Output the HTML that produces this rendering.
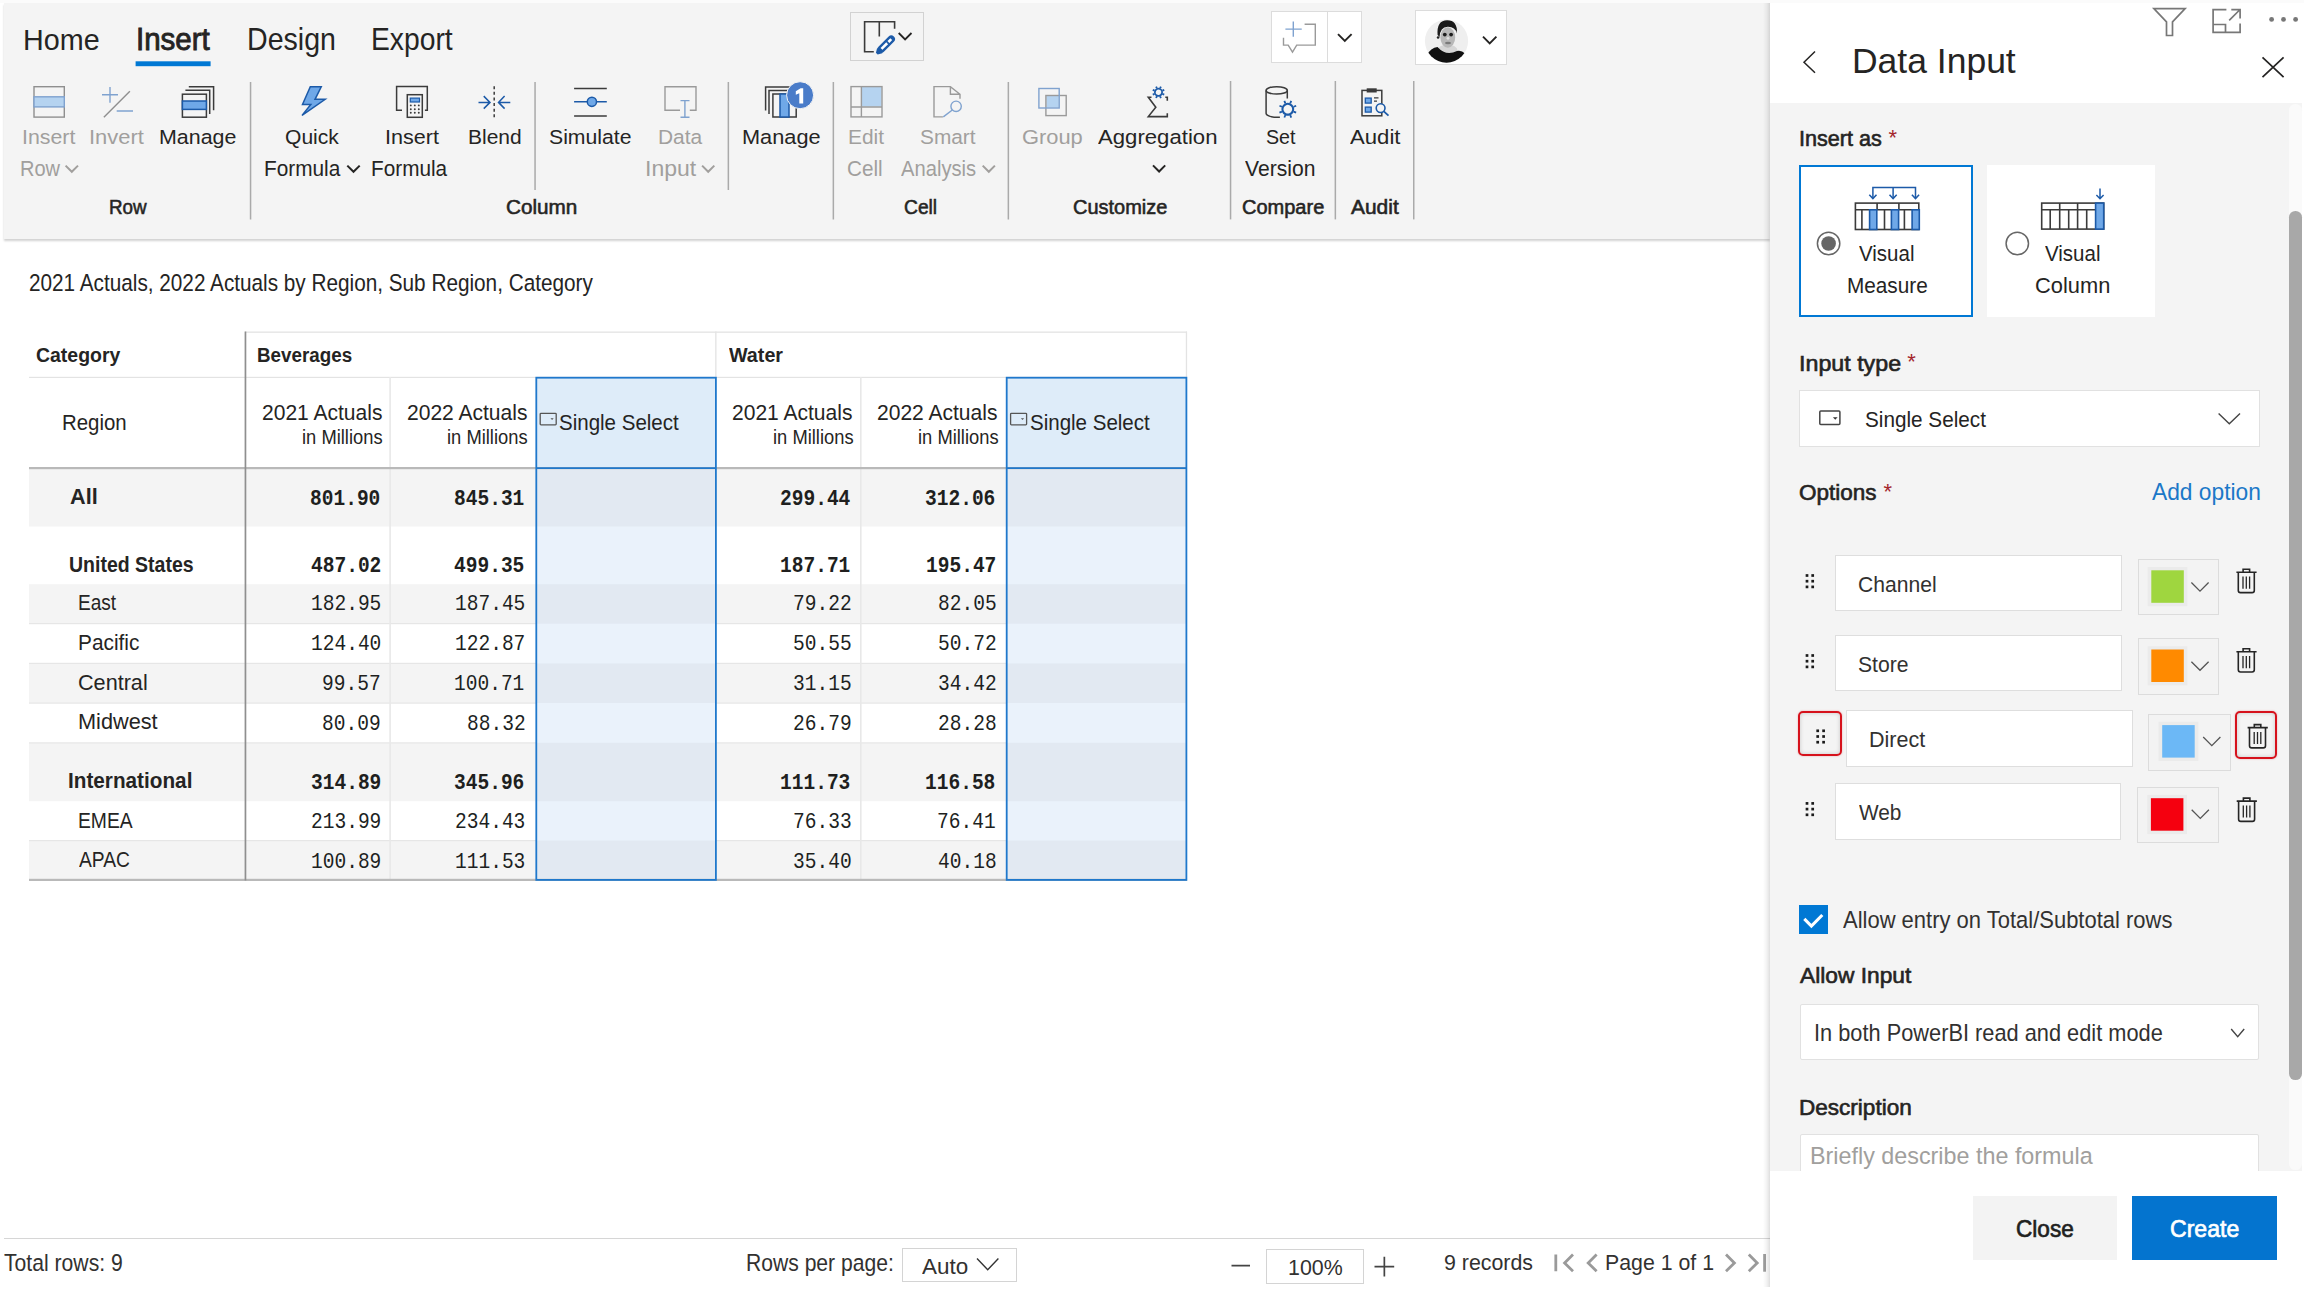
<!DOCTYPE html>
<html><head><meta charset="utf-8"><style>
html,body{margin:0;padding:0;}
body{width:2304px;height:1289px;overflow:hidden;position:relative;background:#fff;font-family:"Liberation Sans",sans-serif;}
.b{position:absolute;box-sizing:border-box;}
.t{position:absolute;white-space:pre;transform-origin:0 0;}
svg.ov{position:absolute;left:0;top:0;}
</style></head><body>
<!-- top strip -->
<div class="b" style="left:0;top:0;width:2304px;height:3px;background:#fbfbfb"></div>
<!-- ribbon -->
<div class="b" style="left:4px;top:2.5px;width:1766px;height:236.5px;background:#f4f4f4;box-shadow:0 1.5px 2px rgba(0,0,0,0.18)"></div>
<!-- status line -->
<div class="b" style="left:4px;top:1237.5px;width:1766px;height:1.5px;background:#d6d6d6"></div>
<div class="b" style="left:901.7px;top:1247.6px;width:115.7px;height:34.4px;border:1px solid #d4d4d4;background:#fff"></div>
<div class="b" style="left:1265.9px;top:1248.8px;width:97.9px;height:35.2px;border:1px solid #d4d4d4;background:#fff"></div>
<!-- panel -->
<div class="b" style="left:1763px;top:2.5px;width:7px;height:1284.5px;background:linear-gradient(to right, rgba(0,0,0,0), rgba(0,0,0,0.05) 55%, rgba(0,0,0,0.13))"></div>
<div class="b" style="left:1770px;top:2.5px;width:534px;height:1286.5px;background:#fff"></div>
<div class="b" style="left:1770px;top:103.4px;width:532px;height:1067.2px;background:#f4f4f4"></div>
<div class="b" style="left:2289px;top:104px;width:12.7px;height:1066px;background:#fafafa;border-radius:6.35px"></div>
<div class="b" style="left:2289px;top:211px;width:12.7px;height:868.5px;background:#a8a8a8;border-radius:6.35px"></div>
<!-- visual measure / column boxes -->
<div class="b" style="left:1798.8px;top:165.4px;width:174.4px;height:151.2px;background:#fff;border:2px solid #0078d4"></div>
<div class="b" style="left:1987.4px;top:165.4px;width:167.6px;height:151.2px;background:#fff"></div>
<!-- input type dropdown -->
<div class="b" style="left:1799.3px;top:390.3px;width:460.3px;height:56.6px;background:#fff;border:1px solid #e1e1e1"></div>
<!-- option rows -->
<div class="b" style="left:1835.2px;top:555.4px;width:286.6px;height:56px;background:#fff;border:1px solid #dedede"></div>
<div class="b" style="left:2137.5px;top:558.8px;width:81.9px;height:56.3px;background:#f3f3f3;border:1px solid #dcdcdc"></div>
<div class="b" style="left:1835.2px;top:634.9px;width:286.6px;height:56.3px;background:#fff;border:1px solid #dedede"></div>
<div class="b" style="left:2137.5px;top:638px;width:81.9px;height:56.6px;background:#f3f3f3;border:1px solid #dcdcdc"></div>
<div class="b" style="left:1846.1px;top:710.4px;width:287.4px;height:56.6px;background:#fff;border:1px solid #dedede"></div>
<div class="b" style="left:2148.4px;top:713.6px;width:82.5px;height:57px;background:#f3f3f3;border:1px solid #dcdcdc"></div>
<div class="b" style="left:1835.3px;top:783.3px;width:286.2px;height:56.3px;background:#fff;border:1px solid #dedede"></div>
<div class="b" style="left:2137.1px;top:786.7px;width:82.3px;height:56.5px;background:#f3f3f3;border:1px solid #dcdcdc"></div>
<!-- red highlight boxes -->
<div class="b" style="left:1797.6px;top:710.6px;width:44.4px;height:45.4px;border:2.2px solid #d6121c;border-radius:5px;box-shadow:inset 0 0 4px rgba(0,0,0,0.18), 0 0 2px rgba(214,18,28,0.35)"></div>
<div class="b" style="left:2235px;top:711px;width:41.6px;height:48.3px;border:2.2px solid #d6121c;border-radius:5px;box-shadow:inset 0 0 4px rgba(0,0,0,0.18), 0 0 2px rgba(214,18,28,0.35)"></div>
<!-- checkbox -->
<div class="b" style="left:1799px;top:905.2px;width:28.8px;height:28.9px;background:#0078d4"></div>
<!-- allow input dropdown -->
<div class="b" style="left:1799.6px;top:1003.5px;width:459.8px;height:56.8px;background:#fff;border:1px solid #e1e1e1;border-radius:2px"></div>
<!-- description -->
<div class="b" style="left:1799.6px;top:1133.9px;width:459.8px;height:60px;background:#fff;border:1px solid #e1e1e1;border-radius:2px"></div>
<!-- footer -->
<div class="b" style="left:1770px;top:1170.6px;width:534px;height:116.4px;background:#fff"></div>
<div class="b" style="left:1972.7px;top:1195.8px;width:144.5px;height:64.7px;background:#f3f3f3"></div>
<div class="b" style="left:2131.6px;top:1195.8px;width:145.1px;height:64.7px;background:#0474cf"></div>
<!-- top buttons -->
<div class="b" style="left:849.6px;top:11.8px;width:74.9px;height:49.4px;border:1.5px solid #d2d2d2;background:#f4f4f4"></div>
<div class="b" style="left:1271.3px;top:10.7px;width:91.2px;height:52.5px;border:1px solid #dcdcdc;background:#fff"></div>
<div class="b" style="left:1327.2px;top:11px;width:1px;height:52px;background:#dcdcdc"></div>
<div class="b" style="left:1414.6px;top:9.6px;width:92.3px;height:55.6px;border:1px solid #dcdcdc;background:#fff"></div>

<svg class="ov" width="2304" height="1289" viewBox="0 0 2304 1289">
<!-- table row backgrounds -->
<g fill="#f4f4f4">
<rect x="29" y="468" width="1158" height="58.5"/>
<rect x="29" y="584.2" width="1158" height="39.5"/>
<rect x="29" y="663.4" width="1158" height="39.6"/>
<rect x="29" y="742.8" width="1158" height="58.4"/>
<rect x="29" y="840.6" width="1158" height="39.4"/>
</g>
<g fill="#e6e6e6">
<rect x="29" y="623" width="1158" height="1.2"/>
<rect x="29" y="662.8" width="1158" height="1.2"/>
<rect x="29" y="702.5" width="1158" height="1.2"/>
<rect x="29" y="742.3" width="1158" height="1.2"/>
<rect x="29" y="840" width="1158" height="1.2"/>
</g>
<!-- single select column tints -->
<g>
<rect x="536.2" y="377.2" width="179.6" height="91" fill="#deecf9"/>
<rect x="1006.6" y="377.2" width="180" height="91" fill="#deecf9"/>
<rect x="536.2" y="468" width="179.6" height="412" fill="#eaf2fb"/>
<rect x="1006.6" y="468" width="180" height="412" fill="#eaf2fb"/>
<g fill="#e2e9f2">
<rect x="536.2" y="468" width="179.6" height="58.5"/><rect x="1006.6" y="468" width="180" height="58.5"/>
<rect x="536.2" y="584.2" width="179.6" height="39.5"/><rect x="1006.6" y="584.2" width="180" height="39.5"/>
<rect x="536.2" y="663.4" width="179.6" height="39.6"/><rect x="1006.6" y="663.4" width="180" height="39.6"/>
<rect x="536.2" y="742.8" width="179.6" height="58.4"/><rect x="1006.6" y="742.8" width="180" height="58.4"/>
<rect x="536.2" y="840.6" width="179.6" height="39.4"/><rect x="1006.6" y="840.6" width="180" height="39.4"/>
</g>
</g>
<!-- header lines -->
<rect x="245" y="331.5" width="942" height="1.3" fill="#e3e3e3"/>
<rect x="29" y="376.8" width="1158" height="1.2" fill="#e3e3e3"/>
<rect x="1185.8" y="331.5" width="1.3" height="46" fill="#e3e3e3"/>
<rect x="715.2" y="331.5" width="1.3" height="46" fill="#e3e3e3"/>
<rect x="389.3" y="377" width="1.6" height="503" fill="#e8e8e8"/>
<rect x="860" y="377" width="1.6" height="503" fill="#e8e8e8"/>
<rect x="29" y="467" width="1158" height="2.2" fill="#b9b9b9"/>
<rect x="29" y="878.8" width="1158" height="2.2" fill="#b9b9b9"/>
<rect x="244.6" y="331.5" width="1.7" height="549" fill="#8f8f8f"/>
<!-- blue column borders -->
<g fill="none" stroke="#1f78cc" stroke-width="1.8">
<rect x="536.3" y="377.7" width="179.6" height="502.2"/>
<rect x="1006.7" y="377.7" width="179.7" height="502.2"/>
<line x1="536.3" y1="468.1" x2="716" y2="468.1"/>
<line x1="1006.7" y1="468.1" x2="1186.4" y2="468.1"/>
</g>
<!-- header select icons -->
<g fill="none" stroke="#555" stroke-width="1.3">
<rect x="540.2" y="413.3" width="16" height="11.5" rx="0.8"/>
<rect x="1010.6" y="413.3" width="16" height="11.5" rx="0.8"/>
</g>
<g fill="#555"><path d="M550.5 418.2h3.2l-1.6 1.8z"/><path d="M1020.9 418.2h3.2l-1.6 1.8z"/></g>
<!-- tab underline -->
<rect x="135.6" y="61.3" width="75" height="4.9" fill="#0078d4"/>
<!-- separators -->
<g fill="#aaaaaa">
<rect x="249.8" y="82" width="1.5" height="137.5"/>
<rect x="534.3" y="82" width="1.5" height="108"/>
<rect x="727.6" y="82" width="1.5" height="108"/>
<rect x="832.6" y="82" width="1.5" height="137.5"/>
<rect x="1007.6" y="82" width="1.5" height="137.5"/>
<rect x="1229.8" y="81" width="1.5" height="138.4"/>
<rect x="1334.6" y="81" width="1.5" height="138.4"/>
<rect x="1413" y="81" width="1.5" height="138.4"/>
</g>
<g fill="none" stroke-width="1.5" stroke-linejoin="miter">
<!-- Insert row (disabled) -->
<rect x="34" y="86.7" width="30.3" height="30.4" stroke="#8f8f8f" stroke-width="1.4"/>
<rect x="34" y="96.8" width="30.3" height="10.1" fill="#b5d3f0" stroke="#7fa2cf" stroke-width="1.4"/>
<!-- Invert (disabled) -->
<path d="M102 94.8H118M110 87V102.7M116.7 111H133" stroke="#7fa2cf" stroke-width="1.4"/>
<path d="M103.9 117.2L129.9 91.2" stroke="#8f8f8f" stroke-width="1.4"/>
<!-- Manage rows -->
<path d="M188.8 86.7H213.6V110.3M185.4 90.3H209.7V114.1" stroke="#3b3b3b"/>
<rect x="182.4" y="94.2" width="24" height="23" stroke="#3b3b3b" fill="#f4f4f4"/>
<rect x="182.4" y="101" width="24" height="8.4" stroke="#1c5aa8" fill="#6fa8e8"/>
<!-- Quick formula -->
<path d="M310.3 86.8H321.25L315 99.3H325.2L302 115.4L310.8 104.5H302.5Z" fill="#6fa8e8" stroke="#1c5aa8" stroke-width="1.5"/>
<!-- Insert formula -->
<path d="M402 110.2H396.6V86.6H427.3V110.2H424.9" stroke="#3b3b3b"/>
<rect x="407.3" y="94.7" width="15" height="22.6" stroke="#3b3b3b" fill="#f4f4f4"/>
<rect x="410.3" y="98.1" width="9.2" height="3.9" stroke="#1c5aa8" stroke-width="1.2" fill="#6fa8e8"/>
<!-- Blend -->
<path d="M494.2 86.25V118" stroke="#3b3b3b" stroke-dasharray="3 2.6"/>
<path d="M478.5 102.4H490M483.75 96.1L490 102.4L483.75 108.6M510.3 102.4H498.8M504.6 96.1L498.5 102.4L504.6 108.6" stroke="#1c5aa8"/>
<!-- Simulate -->
<path d="M574.1 88.5H606.8M574.1 115.9H606.8" stroke="#3b3b3b"/>
<path d="M574.1 101.8H606.8" stroke="#1c5aa8"/>
<circle cx="591.9" cy="101.8" r="4.6" fill="#6fa8e8" stroke="#1c5aa8"/>
<!-- Data input (disabled) -->
<path d="M680 110.2H665V86.7H696V110.2H689.8" stroke="#9a9a9a" stroke-width="1.4"/>
<path d="M684.9 100.6V117.2M680.5 100.6H689.5M680.5 117.2H689.5" stroke="#7fa2cf" stroke-width="1.4"/>
<!-- Manage badge -->
<path d="M765.6 110.5V86.9H790M769 113.9V90.4H792" stroke="#3b3b3b"/>
<rect x="772.9" y="94" width="23.3" height="23" stroke="#3b3b3b" fill="#f4f4f4"/>
<rect x="780" y="94" width="9" height="23" stroke="#1c5aa8" fill="#6fa8e8"/>
<circle cx="800.1" cy="95.2" r="13.5" fill="#4a7cc9" stroke="#f4f4f4" stroke-width="1"/>
<!-- Edit cell (disabled) -->
<rect x="862" y="87" width="19.6" height="19.6" fill="#b5d3f0" stroke="none"/>
<rect x="851" y="86.6" width="31" height="30.3" stroke="#9a9a9a" stroke-width="1.4"/>
<path d="M861.4 86.6V116.9M851 107H882" stroke="#9a9a9a" stroke-width="1.4"/>
<!-- Smart analysis (disabled) -->
<path d="M942.9 116.9H934V86.6H950.4L960 94.3V98.8M950.4 86.6V94.3H960" stroke="#9a9a9a" stroke-width="1.4"/>
<circle cx="956.1" cy="106.3" r="5.2" stroke="#7fa2cf" stroke-width="1.4"/>
<path d="M952.3 110L943.3 116.9" stroke="#7fa2cf" stroke-width="1.4"/>
<!-- Group (disabled) -->
<rect x="1046.3" y="95.9" width="12.5" height="11.7" fill="#b5d3f0" stroke="none"/>
<rect x="1045.9" y="95.5" width="20.3" height="20.1" stroke="#9a9a9a" stroke-width="1.4"/>
<rect x="1038.9" y="88.5" width="20.3" height="19.5" stroke="#7fa2cf" stroke-width="1.4"/>
<!-- Aggregation -->
<path d="M1151.5 97.3H1148.3L1155.8 107.2L1148.3 116.6H1167.3V113.3M1165.3 97.3H1167.3V100.8" stroke="#3b3b3b" stroke-width="1.6"/>
<g transform="translate(1158.5 92.3) rotate(22.5)">
<circle r="3.6" stroke="#1c5aa8" stroke-width="1.8" fill="#f4f4f4"/>
<path d="M0 -6.2V-4.2M0 6.2V4.2M-6.2 0H-4.2M6.2 0H4.2M-4.4 -4.4L-3 -3M4.4 4.4L3 3M-4.4 4.4L-3 3M4.4 -4.4L3 -3" stroke="#1c5aa8" stroke-width="1.8"/>
</g>
<!-- Set version -->
<ellipse cx="1276.7" cy="90.4" rx="10.6" ry="3.7" stroke="#3b3b3b"/>
<path d="M1266.1 90.4V113.6C1266.1 116 1272 117.4 1279.9 117.3M1287.3 90.4V98.4" stroke="#3b3b3b"/>
<g transform="translate(1287.8 109.2) rotate(22.5)">
<circle r="5.4" stroke="#1c5aa8" stroke-width="2.1" fill="#f4f4f4"/>
<path d="M0 -9V-6.3M0 9V6.3M-9 0H-6.3M9 0H6.3M-6.4 -6.4L-4.5 -4.5M6.4 6.4L4.5 4.5M-6.4 6.4L-4.5 4.5M6.4 -6.4L4.5 -4.5" stroke="#1c5aa8" stroke-width="1.8"/>
</g>
<!-- Audit -->
<rect x="1362" y="90.4" width="19.8" height="25.4" stroke="#3b3b3b"/>
<rect x="1366.7" y="88.3" width="10" height="4.2" fill="#3b3b3b" stroke="none"/>
<rect x="1365.3" y="98.1" width="5.9" height="5" fill="#6fa8e8" stroke="#1c5aa8" stroke-width="1.3"/>
<rect x="1365.3" y="107.1" width="5.9" height="5" fill="#6fa8e8" stroke="#1c5aa8" stroke-width="1.3"/>
<path d="M1374 97.9H1378.5M1374 101.2H1377" stroke="#3b3b3b" stroke-width="1.2"/>
<circle cx="1380.6" cy="108.1" r="4.4" stroke="#1c5aa8" stroke-width="1.6" fill="#f4f4f4"/>
<path d="M1383.8 111.3L1388.5 115.6" stroke="#1c5aa8" stroke-width="1.8"/>
<!-- chevrons in ribbon -->
<path d="M65.6 165.6L71.8 171.8L78 165.6" stroke="#a19f9d" stroke-width="2"/>
<path d="M347.3 165.6L353.5 171.8L359.7 165.6" stroke="#252423" stroke-width="2"/>
<path d="M702.1 165.6L708.2 171.8L714.3 165.6" stroke="#a19f9d" stroke-width="2"/>
<path d="M982.7 165.6L988.8 171.8L994.9 165.6" stroke="#a19f9d" stroke-width="2"/>
<path d="M1153 165.4L1159.1 171.5L1165.2 165.4" stroke="#252423" stroke-width="2"/>
<!-- pen button -->
<path d="M873.8 51.8H864.6V21.8H894.6V28.7M879.3 21.8V36.5" stroke="#3b3b3b" stroke-width="1.6"/>
<path d="M898.7 33L905.1 39.4L911.5 33" stroke="#252423" stroke-width="1.8"/>
<!-- comment button -->
<path d="M1285.4 29.1H1301.75M1293.3 21.4V36.7" stroke="#7fa2cf" stroke-width="1.4"/>
<path d="M1304.6 24.3H1315.3V45.1H1296.7L1292.5 52.1L1288.2 45.1H1283.5V37.8" stroke="#9a9a9a" stroke-width="1.4"/>
<path d="M1338 34.2L1344.8 41L1351.6 34.2" stroke="#252423" stroke-width="1.9"/>
<path d="M1483 36.6L1489.7 43.4L1496.4 36.6" stroke="#252423" stroke-width="1.9"/>
<!-- panel header -->
<path d="M1815 51.5L1804 62.2L1815 72.8" stroke="#252423" stroke-width="1.5"/>
<path d="M2262.5 57.3L2283.6 77.2M2283.6 57.3L2262.5 77.2" stroke="#252423" stroke-width="1.7"/>
<path d="M2153.9 8.6H2185.1L2172.5 21.8V35.5H2166.5V21.8Z" stroke="#777" stroke-width="1.7"/>
<path d="M2226.4 9.7H2213.1V32.4H2240.1V23.5M2213.1 24.5H2225.5V32.4M2229.2 20.3L2239.6 10M2231.3 9.7H2240.1V18.5" stroke="#777" stroke-width="1.7"/>
</g>
<g fill="#777"><circle cx="2271.6" cy="19.4" r="2.4"/><circle cx="2283.5" cy="19.4" r="2.4"/><circle cx="2295.6" cy="19.4" r="2.4"/></g>
<!-- badge 1 -->
<path d="M795.8 91.3L800.6 88.3H803.2V103.4H799.3V93.3L795.8 94.8Z" fill="#fff"/>
<!-- pen -->
<g transform="translate(886.8 43.6) rotate(-45)">
<rect x="-11.5" y="-3.7" width="21.5" height="7.4" rx="3.7" fill="#1c5aa8"/>
<rect x="-7.5" y="-1.3" width="8" height="2.6" fill="#fff"/>
<rect x="2.3" y="-1.3" width="4" height="2.6" fill="#fff"/>
<path d="M-10 -3.7L-14.2 -1.2V1.2L-10 3.7Z" fill="#1c5aa8"/>
</g>
<!-- avatar -->
<defs><clipPath id="av"><circle cx="1446.5" cy="41.1" r="21.6"/></clipPath></defs>
<g clip-path="url(#av)">
<rect x="1424" y="19" width="46" height="46" fill="#efefef"/>
<ellipse cx="1447.5" cy="50.5" rx="10" ry="6" fill="#d6d6d6"/>
<path d="M1426 56Q1431 47.5 1437.5 47Q1446 56.5 1457 51Q1461.5 50 1465 53.5L1472 70L1420 70Z" fill="#111"/>
<ellipse cx="1447.8" cy="37.5" rx="7.4" ry="10.2" fill="#b8b8b8"/>
<path d="M1437.6 35Q1436.5 20.3 1447.2 20.3Q1457.5 20.3 1457 33.5Q1455 26.5 1447.6 26.8Q1440 27.3 1439.6 37Z" fill="#1b1b1b"/>
<circle cx="1444.8" cy="34.6" r="1.9" fill="#1e1e1e"/><circle cx="1451.1" cy="34.6" r="1.9" fill="#1e1e1e"/>
<circle cx="1448" cy="38.3" r="1.4" fill="#e0e0e0"/>
<ellipse cx="1448" cy="43" rx="3" ry="1.2" fill="#7a7a7a"/>
<circle cx="1438.1" cy="37.5" r="1.3" fill="#222"/>
</g>
<g fill="#3b3b3b">
<circle cx="410.8" cy="105.4" r="0.95"/><circle cx="414.8" cy="105.4" r="0.95"/><circle cx="418.8" cy="105.4" r="0.95"/>
<circle cx="410.8" cy="109.2" r="0.95"/><circle cx="414.8" cy="109.2" r="0.95"/><circle cx="418.8" cy="109.2" r="0.95"/>
<circle cx="410.8" cy="112.8" r="0.95"/><circle cx="414.8" cy="112.8" r="0.95"/><circle cx="418.8" cy="112.8" r="0.95"/>
</g>
<circle cx="1828.6" cy="243.5" r="11.2" fill="#fff" stroke="#666" stroke-width="1.5"/>
<circle cx="1828.6" cy="243.5" r="7.3" fill="#666"/>
<circle cx="2017.3" cy="243.5" r="11.2" fill="#fff" stroke="#666" stroke-width="1.5"/>
<g fill="none" stroke="#3b3b3b" stroke-width="1.6">
<rect x="1855.4" y="203.1" width="63.4" height="26.4"/>
<path d="M1855.4 209.8H1918.8M1877.1 203.1V209.8M1898.9 203.1V209.8M1861.9 209.8V229.5M1884.5 209.8V229.5M1904.4 209.8V229.5"/>
</g>
<rect x="1869.6" y="209.8" width="7.2" height="19.7" fill="#6fa8e8" stroke="#1c5aa8" stroke-width="1.6"/>
<rect x="1891.4" y="209.8" width="7.2" height="19.7" fill="#6fa8e8" stroke="#1c5aa8" stroke-width="1.6"/>
<rect x="1912.1" y="209.8" width="7.2" height="19.7" fill="#6fa8e8" stroke="#1c5aa8" stroke-width="1.6"/>
<g fill="none" stroke="#1c5aa8" stroke-width="1.5">
<path d="M1872.9 198.2V187.6H1915.5V198.2M1893.1 187.6V198.2"/>
<path d="M1869.3000000000002 194.8L1872.9 198.6L1876.5 194.8"/>
<path d="M1889.5 194.8L1893.1 198.6L1896.6999999999998 194.8"/>
<path d="M1911.9 194.8L1915.5 198.6L1919.1 194.8"/>
</g>
<g fill="none" stroke="#3b3b3b" stroke-width="1.6">
<rect x="2041.7" y="203.1" width="62" height="26"/>
<path d="M2041.7 209.8H2095.2M2059.7 203.1V229.1M2077.6 203.1V229.1M2050.2 209.8V229.1M2068.7 209.8V229.1M2086.7 209.8V229.1"/>
</g>
<rect x="2095.6" y="203.1" width="8.1" height="26" fill="#6fa8e8" stroke="#1c5aa8" stroke-width="1.6"/>
<path d="M2100 188.4V198.5M2096.4 195L2100 198.7L2103.6 195" fill="none" stroke="#1c5aa8" stroke-width="1.5"/>
<rect x="1819.8" y="411.1" width="20.1" height="13.5" rx="1" fill="none" stroke="#444" stroke-width="1.5"/>
<path d="M1832.9 417.2H1837.6L1835.25 419.8Z" fill="#333"/>
<path d="M2218.6 413.5L2229.3 423.8L2240 413.5" fill="none" stroke="#444" stroke-width="1.4"/>
<rect x="1805.65" y="574.15" width="2.7" height="2.7" fill="#1a1a1a"/>
<rect x="1805.65" y="579.85" width="2.7" height="2.7" fill="#1a1a1a"/>
<rect x="1805.65" y="585.55" width="2.7" height="2.7" fill="#1a1a1a"/>
<rect x="1811.3500000000001" y="574.15" width="2.7" height="2.7" fill="#1a1a1a"/>
<rect x="1811.3500000000001" y="579.85" width="2.7" height="2.7" fill="#1a1a1a"/>
<rect x="1811.3500000000001" y="585.55" width="2.7" height="2.7" fill="#1a1a1a"/>
<rect x="1805.65" y="654.15" width="2.7" height="2.7" fill="#1a1a1a"/>
<rect x="1805.65" y="659.85" width="2.7" height="2.7" fill="#1a1a1a"/>
<rect x="1805.65" y="665.55" width="2.7" height="2.7" fill="#1a1a1a"/>
<rect x="1811.3500000000001" y="654.15" width="2.7" height="2.7" fill="#1a1a1a"/>
<rect x="1811.3500000000001" y="659.85" width="2.7" height="2.7" fill="#1a1a1a"/>
<rect x="1811.3500000000001" y="665.55" width="2.7" height="2.7" fill="#1a1a1a"/>
<rect x="1816.3500000000001" y="729.4499999999999" width="2.7" height="2.7" fill="#1a1a1a"/>
<rect x="1816.3500000000001" y="735.15" width="2.7" height="2.7" fill="#1a1a1a"/>
<rect x="1816.3500000000001" y="740.85" width="2.7" height="2.7" fill="#1a1a1a"/>
<rect x="1822.25" y="729.4499999999999" width="2.7" height="2.7" fill="#1a1a1a"/>
<rect x="1822.25" y="735.15" width="2.7" height="2.7" fill="#1a1a1a"/>
<rect x="1822.25" y="740.85" width="2.7" height="2.7" fill="#1a1a1a"/>
<rect x="1805.65" y="802.05" width="2.7" height="2.7" fill="#1a1a1a"/>
<rect x="1805.65" y="807.75" width="2.7" height="2.7" fill="#1a1a1a"/>
<rect x="1805.65" y="813.4499999999999" width="2.7" height="2.7" fill="#1a1a1a"/>
<rect x="1811.3500000000001" y="802.05" width="2.7" height="2.7" fill="#1a1a1a"/>
<rect x="1811.3500000000001" y="807.75" width="2.7" height="2.7" fill="#1a1a1a"/>
<rect x="1811.3500000000001" y="813.4499999999999" width="2.7" height="2.7" fill="#1a1a1a"/>
<rect x="2147.6" y="567" width="39.8" height="39.2" fill="#ebebeb"/>
<rect x="2151.2999999999997" y="570.3" width="32.5" height="32.5" fill="#9fd63f"/>
<rect x="2147.6" y="646.2" width="39.8" height="39.2" fill="#ebebeb"/>
<rect x="2151.2999999999997" y="649.5" width="32.5" height="32.5" fill="#ff8a00"/>
<rect x="2158.5" y="721.8" width="39.8" height="39.2" fill="#ebebeb"/>
<rect x="2162.2" y="725.0999999999999" width="32.5" height="32.5" fill="#6cb8f6"/>
<rect x="2147.2" y="794.9" width="39.8" height="39.2" fill="#ebebeb"/>
<rect x="2150.8999999999996" y="798.1999999999999" width="32.5" height="32.5" fill="#f5000f"/>
<path d="M2191.4 582.5L2200.0 591.1L2208.6 582.5" fill="none" stroke="#555" stroke-width="1.3"/>
<path d="M2191.4 661.7L2200.0 670.3000000000001L2208.6 661.7" fill="none" stroke="#555" stroke-width="1.3"/>
<path d="M2203.2 737.0L2211.7999999999997 745.6L2220.3999999999996 737.0" fill="none" stroke="#555" stroke-width="1.3"/>
<path d="M2191.7 809.8L2200.2999999999997 818.4L2208.8999999999996 809.8" fill="none" stroke="#555" stroke-width="1.3"/>
<g transform="translate(0 0)" fill="none" stroke="#252525" stroke-width="1.6"><path d="M2236.4 572.3H2256.6M2243.1 572.3V569.3H2249.6V572.3"/><path d="M2238.3 572.3V590.4Q2238.3 592.6 2240.5 592.6H2252.1Q2254.3 592.6 2254.3 590.4V572.3"/><path d="M2243 576.6V588.8M2246.3 576.6V588.8M2249.6 576.6V588.8" stroke-width="1.3"/></g>
<g transform="translate(0 79.4)" fill="none" stroke="#252525" stroke-width="1.6"><path d="M2236.4 572.3H2256.6M2243.1 572.3V569.3H2249.6V572.3"/><path d="M2238.3 572.3V590.4Q2238.3 592.6 2240.5 592.6H2252.1Q2254.3 592.6 2254.3 590.4V572.3"/><path d="M2243 576.6V588.8M2246.3 576.6V588.8M2249.6 576.6V588.8" stroke-width="1.3"/></g>
<g transform="translate(11.2 155.3)" fill="none" stroke="#252525" stroke-width="1.6"><path d="M2236.4 572.3H2256.6M2243.1 572.3V569.3H2249.6V572.3"/><path d="M2238.3 572.3V590.4Q2238.3 592.6 2240.5 592.6H2252.1Q2254.3 592.6 2254.3 590.4V572.3"/><path d="M2243 576.6V588.8M2246.3 576.6V588.8M2249.6 576.6V588.8" stroke-width="1.3"/></g>
<g transform="translate(0.3 228.8)" fill="none" stroke="#252525" stroke-width="1.6"><path d="M2236.4 572.3H2256.6M2243.1 572.3V569.3H2249.6V572.3"/><path d="M2238.3 572.3V590.4Q2238.3 592.6 2240.5 592.6H2252.1Q2254.3 592.6 2254.3 590.4V572.3"/><path d="M2243 576.6V588.8M2246.3 576.6V588.8M2249.6 576.6V588.8" stroke-width="1.3"/></g>
<path d="M1804.3 918.9L1811.4 926L1822.3 915" fill="none" stroke="#fff" stroke-width="3.1"/>
<path d="M2231.2 1029L2237.7 1036.6L2244.2 1029" fill="none" stroke="#444" stroke-width="1.4"/>
<path d="M977 1258.6L987.7 1269.8L998.4 1258.6" fill="none" stroke="#333" stroke-width="1.4"/>
<path d="M1231.5 1265.6H1250M1374.5 1266.6H1394.2M1384.35 1256.7V1276.5" fill="none" stroke="#444" stroke-width="1.7"/>
<g fill="none" stroke="#9a9a9a" stroke-width="2.8">
<path d="M1555.8 1254.4V1271.3M1573 1254.6L1564.6 1262.9L1573 1271.2"/>
<path d="M1596.6 1254.6L1588.2 1262.9L1596.6 1271.2"/>
<path d="M1726 1254.6L1734.4 1262.9L1726 1271.2"/>
<path d="M1748.8 1254.6L1757.2 1262.9L1748.8 1271.2"/>
</g>
<rect x="1763.2" y="1254" width="2.8" height="17.7" fill="#9a9a9a"/>
</svg>
<span class="t" style="top:23.78px;font:400 30.38px/30.38px 'Liberation Sans', sans-serif;color:#252423;left:22.61px;transform:scaleX(0.9458);">Home</span>
<span class="t" style="top:23.56px;font:400 31.11px/31.11px 'Liberation Sans', sans-serif;color:#252423;-webkit-text-stroke:0.87px #252423;left:136.30px;transform:scaleX(0.9480);">Insert</span>
<span class="t" style="top:23.66px;font:400 31.11px/31.11px 'Liberation Sans', sans-serif;color:#252423;left:246.86px;transform:scaleX(0.9184);">Design</span>
<span class="t" style="top:23.66px;font:400 31.11px/31.11px 'Liberation Sans', sans-serif;color:#252423;left:371.08px;transform:scaleX(0.9086);">Export</span>
<span class="t" style="top:125.85px;font:400 21.08px/21.08px 'Liberation Sans', sans-serif;color:#a19f9d;left:21.99px;transform:scaleX(1.0123);">Insert</span>
<span class="t" style="top:125.85px;font:400 21.08px/21.08px 'Liberation Sans', sans-serif;color:#a19f9d;left:88.96px;transform:scaleX(1.0413);">Invert</span>
<span class="t" style="top:125.85px;font:400 21.08px/21.08px 'Liberation Sans', sans-serif;color:#252423;left:159.18px;transform:scaleX(1.0155);">Manage</span>
<span class="t" style="top:125.85px;font:400 21.08px/21.08px 'Liberation Sans', sans-serif;color:#252423;left:284.70px;transform:scaleX(0.9993);">Quick</span>
<span class="t" style="top:125.85px;font:400 21.08px/21.08px 'Liberation Sans', sans-serif;color:#252423;left:384.98px;transform:scaleX(1.0220);">Insert</span>
<span class="t" style="top:125.85px;font:400 21.08px/21.08px 'Liberation Sans', sans-serif;color:#252423;left:468.00px;transform:scaleX(0.9964);">Blend</span>
<span class="t" style="top:125.85px;font:400 21.08px/21.08px 'Liberation Sans', sans-serif;color:#252423;left:549.40px;transform:scaleX(1.0063);">Simulate</span>
<span class="t" style="top:125.85px;font:400 21.08px/21.08px 'Liberation Sans', sans-serif;color:#a19f9d;left:657.81px;transform:scaleX(0.9931);">Data</span>
<span class="t" style="top:125.85px;font:400 21.08px/21.08px 'Liberation Sans', sans-serif;color:#252423;left:741.67px;transform:scaleX(1.0316);">Manage</span>
<span class="t" style="top:125.85px;font:400 21.08px/21.08px 'Liberation Sans', sans-serif;color:#a19f9d;left:848.41px;transform:scaleX(0.9925);">Edit</span>
<span class="t" style="top:125.85px;font:400 21.08px/21.08px 'Liberation Sans', sans-serif;color:#a19f9d;left:920.00px;transform:scaleX(0.9883);">Smart</span>
<span class="t" style="top:125.85px;font:400 21.08px/21.08px 'Liberation Sans', sans-serif;color:#a19f9d;left:1021.96px;transform:scaleX(1.0376);">Group</span>
<span class="t" style="top:125.85px;font:400 21.08px/21.08px 'Liberation Sans', sans-serif;color:#252423;left:1098.00px;transform:scaleX(1.0509);">Aggregation</span>
<span class="t" style="top:125.85px;font:400 21.08px/21.08px 'Liberation Sans', sans-serif;color:#252423;left:1266.40px;transform:scaleX(0.9314);">Set</span>
<span class="t" style="top:125.85px;font:400 21.08px/21.08px 'Liberation Sans', sans-serif;color:#252423;left:1350.40px;transform:scaleX(1.0501);">Audit</span>
<span class="t" style="top:158.04px;font:400 21.8px/21.8px 'Liberation Sans', sans-serif;color:#a19f9d;left:20.08px;transform:scaleX(0.9192);">Row</span>
<span class="t" style="top:158.04px;font:400 21.8px/21.8px 'Liberation Sans', sans-serif;color:#252423;left:263.85px;transform:scaleX(0.9547);">Formula</span>
<span class="t" style="top:158.04px;font:400 21.8px/21.8px 'Liberation Sans', sans-serif;color:#252423;left:371.05px;transform:scaleX(0.9522);">Formula</span>
<span class="t" style="top:158.04px;font:400 21.8px/21.8px 'Liberation Sans', sans-serif;color:#a19f9d;left:644.69px;transform:scaleX(1.0555);">Input</span>
<span class="t" style="top:158.04px;font:400 21.8px/21.8px 'Liberation Sans', sans-serif;color:#a19f9d;left:846.65px;transform:scaleX(0.9494);">Cell</span>
<span class="t" style="top:158.04px;font:400 21.8px/21.8px 'Liberation Sans', sans-serif;color:#a19f9d;left:901.00px;transform:scaleX(0.9260);">Analysis</span>
<span class="t" style="top:158.04px;font:400 21.8px/21.8px 'Liberation Sans', sans-serif;color:#252423;left:1244.70px;transform:scaleX(0.9681);">Version</span>
<span class="t" style="top:196.77px;font:400 20.35px/20.35px 'Liberation Sans', sans-serif;color:#252423;-webkit-text-stroke:0.57px #252423;left:109.08px;transform:scaleX(0.9249);">Row</span>
<span class="t" style="top:196.77px;font:400 20.35px/20.35px 'Liberation Sans', sans-serif;color:#252423;-webkit-text-stroke:0.57px #252423;left:505.98px;transform:scaleX(1.0179);">Column</span>
<span class="t" style="top:196.77px;font:400 20.35px/20.35px 'Liberation Sans', sans-serif;color:#252423;-webkit-text-stroke:0.57px #252423;left:904.05px;transform:scaleX(0.9455);">Cell</span>
<span class="t" style="top:196.77px;font:400 20.35px/20.35px 'Liberation Sans', sans-serif;color:#252423;-webkit-text-stroke:0.57px #252423;left:1072.52px;transform:scaleX(0.9812);">Customize</span>
<span class="t" style="top:196.77px;font:400 20.35px/20.35px 'Liberation Sans', sans-serif;color:#252423;-webkit-text-stroke:0.57px #252423;left:1242.02px;transform:scaleX(0.9835);">Compare</span>
<span class="t" style="top:196.77px;font:400 20.35px/20.35px 'Liberation Sans', sans-serif;color:#252423;-webkit-text-stroke:0.57px #252423;left:1351.40px;transform:scaleX(1.0296);">Audit</span>
<span class="t" style="top:271.54px;font:400 23.69px/23.69px 'Liberation Sans', sans-serif;color:#252423;left:28.72px;transform:scaleX(0.8756);">2021 Actuals, 2022 Actuals by Region, Sub Region, Category</span>
<span class="t" style="top:344.77px;font:700 20.35px/20.35px 'Liberation Sans', sans-serif;color:#252423;left:35.50px;transform:scaleX(0.9565);">Category</span>
<span class="t" style="top:344.77px;font:700 20.35px/20.35px 'Liberation Sans', sans-serif;color:#252423;left:256.78px;transform:scaleX(0.9242);">Beverages</span>
<span class="t" style="top:344.77px;font:700 20.35px/20.35px 'Liberation Sans', sans-serif;color:#252423;left:728.50px;transform:scaleX(0.9687);">Water</span>
<span class="t" style="top:411.35px;font:400 22.97px/22.97px 'Liberation Sans', sans-serif;color:#252423;left:61.71px;transform:scaleX(0.8886);">Region</span>
<span class="t" style="top:401.50px;font:400 22.09px/22.09px 'Liberation Sans', sans-serif;color:#252423;left:261.65px;transform:scaleX(0.9525);">2021 Actuals</span>
<span class="t" style="top:427.69px;font:400 19.62px/19.62px 'Liberation Sans', sans-serif;color:#252423;left:302.46px;transform:scaleX(0.9357);">in Millions</span>
<span class="t" style="top:401.50px;font:400 22.09px/22.09px 'Liberation Sans', sans-serif;color:#252423;left:406.65px;transform:scaleX(0.9525);">2022 Actuals</span>
<span class="t" style="top:427.69px;font:400 19.62px/19.62px 'Liberation Sans', sans-serif;color:#252423;left:447.46px;transform:scaleX(0.9357);">in Millions</span>
<span class="t" style="top:401.50px;font:400 22.09px/22.09px 'Liberation Sans', sans-serif;color:#252423;left:732.45px;transform:scaleX(0.9525);">2021 Actuals</span>
<span class="t" style="top:427.69px;font:400 19.62px/19.62px 'Liberation Sans', sans-serif;color:#252423;left:773.26px;transform:scaleX(0.9357);">in Millions</span>
<span class="t" style="top:401.50px;font:400 22.09px/22.09px 'Liberation Sans', sans-serif;color:#252423;left:876.75px;transform:scaleX(0.9525);">2022 Actuals</span>
<span class="t" style="top:427.69px;font:400 19.62px/19.62px 'Liberation Sans', sans-serif;color:#252423;left:917.56px;transform:scaleX(0.9357);">in Millions</span>
<span class="t" style="top:411.45px;font:400 22.97px/22.97px 'Liberation Sans', sans-serif;color:#252423;left:559.01px;transform:scaleX(0.8931);">Single Select</span>
<span class="t" style="top:411.45px;font:400 22.97px/22.97px 'Liberation Sans', sans-serif;color:#252423;left:1029.51px;transform:scaleX(0.8931);">Single Select</span>
<span class="t" style="top:487.29px;font:700 21.51px/21.51px 'Liberation Sans', sans-serif;color:#252423;left:69.50px;transform:scaleX(1.0075);">All</span>
<span class="t" style="top:488.52px;font:700 22.17px/22.17px 'Liberation Mono', monospace;color:#201f1e;left:309.64px;transform:scaleX(0.8815);">801.90</span>
<span class="t" style="top:488.52px;font:700 22.17px/22.17px 'Liberation Mono', monospace;color:#201f1e;left:454.14px;transform:scaleX(0.8815);">845.31</span>
<span class="t" style="top:488.52px;font:700 22.17px/22.17px 'Liberation Mono', monospace;color:#201f1e;left:780.24px;transform:scaleX(0.8815);">299.44</span>
<span class="t" style="top:488.52px;font:700 22.17px/22.17px 'Liberation Mono', monospace;color:#201f1e;left:925.24px;transform:scaleX(0.8815);">312.06</span>
<span class="t" style="top:554.69px;font:700 21.51px/21.51px 'Liberation Sans', sans-serif;color:#252423;left:68.59px;transform:scaleX(0.9067);">United States</span>
<span class="t" style="top:555.92px;font:700 22.17px/22.17px 'Liberation Mono', monospace;color:#201f1e;left:310.52px;transform:scaleX(0.8815);">487.02</span>
<span class="t" style="top:555.92px;font:700 22.17px/22.17px 'Liberation Mono', monospace;color:#201f1e;left:454.14px;transform:scaleX(0.8815);">499.35</span>
<span class="t" style="top:555.92px;font:700 22.17px/22.17px 'Liberation Mono', monospace;color:#201f1e;left:780.24px;transform:scaleX(0.8815);">187.71</span>
<span class="t" style="top:555.92px;font:700 22.17px/22.17px 'Liberation Mono', monospace;color:#201f1e;left:926.12px;transform:scaleX(0.8815);">195.47</span>
<span class="t" style="top:593.19px;font:400 21.51px/21.51px 'Liberation Sans', sans-serif;color:#252423;left:78.01px;transform:scaleX(0.8871);">East</span>
<span class="t" style="top:594.42px;font:400 22.17px/22.17px 'Liberation Mono', monospace;color:#201f1e;left:310.52px;transform:scaleX(0.8815);">182.95</span>
<span class="t" style="top:594.42px;font:400 22.17px/22.17px 'Liberation Mono', monospace;color:#201f1e;left:455.02px;transform:scaleX(0.8815);">187.45</span>
<span class="t" style="top:594.42px;font:400 22.17px/22.17px 'Liberation Mono', monospace;color:#201f1e;left:792.84px;transform:scaleX(0.8815);">79.22</span>
<span class="t" style="top:594.42px;font:400 22.17px/22.17px 'Liberation Mono', monospace;color:#201f1e;left:937.84px;transform:scaleX(0.8815);">82.05</span>
<span class="t" style="top:632.89px;font:400 21.51px/21.51px 'Liberation Sans', sans-serif;color:#252423;left:77.83px;transform:scaleX(0.9684);">Pacific</span>
<span class="t" style="top:634.12px;font:400 22.17px/22.17px 'Liberation Mono', monospace;color:#201f1e;left:310.52px;transform:scaleX(0.8815);">124.40</span>
<span class="t" style="top:634.12px;font:400 22.17px/22.17px 'Liberation Mono', monospace;color:#201f1e;left:455.02px;transform:scaleX(0.8815);">122.87</span>
<span class="t" style="top:634.12px;font:400 22.17px/22.17px 'Liberation Mono', monospace;color:#201f1e;left:792.84px;transform:scaleX(0.8815);">50.55</span>
<span class="t" style="top:634.12px;font:400 22.17px/22.17px 'Liberation Mono', monospace;color:#201f1e;left:937.84px;transform:scaleX(0.8815);">50.72</span>
<span class="t" style="top:672.69px;font:400 21.51px/21.51px 'Liberation Sans', sans-serif;color:#252423;left:77.79px;transform:scaleX(1.0055);">Central</span>
<span class="t" style="top:673.92px;font:400 22.17px/22.17px 'Liberation Mono', monospace;color:#201f1e;left:322.24px;transform:scaleX(0.8815);">99.57</span>
<span class="t" style="top:673.92px;font:400 22.17px/22.17px 'Liberation Mono', monospace;color:#201f1e;left:454.14px;transform:scaleX(0.8815);">100.71</span>
<span class="t" style="top:673.92px;font:400 22.17px/22.17px 'Liberation Mono', monospace;color:#201f1e;left:792.84px;transform:scaleX(0.8815);">31.15</span>
<span class="t" style="top:673.92px;font:400 22.17px/22.17px 'Liberation Mono', monospace;color:#201f1e;left:937.84px;transform:scaleX(0.8815);">34.42</span>
<span class="t" style="top:712.39px;font:400 21.51px/21.51px 'Liberation Sans', sans-serif;color:#252423;left:77.79px;transform:scaleX(1.0093);">Midwest</span>
<span class="t" style="top:713.62px;font:400 22.17px/22.17px 'Liberation Mono', monospace;color:#201f1e;left:322.24px;transform:scaleX(0.8815);">80.09</span>
<span class="t" style="top:713.62px;font:400 22.17px/22.17px 'Liberation Mono', monospace;color:#201f1e;left:466.74px;transform:scaleX(0.8815);">88.32</span>
<span class="t" style="top:713.62px;font:400 22.17px/22.17px 'Liberation Mono', monospace;color:#201f1e;left:792.84px;transform:scaleX(0.8815);">26.79</span>
<span class="t" style="top:713.62px;font:400 22.17px/22.17px 'Liberation Mono', monospace;color:#201f1e;left:937.84px;transform:scaleX(0.8815);">28.28</span>
<span class="t" style="top:771.49px;font:700 21.51px/21.51px 'Liberation Sans', sans-serif;color:#252423;left:68.44px;transform:scaleX(0.9643);">International</span>
<span class="t" style="top:772.72px;font:700 22.17px/22.17px 'Liberation Mono', monospace;color:#201f1e;left:310.52px;transform:scaleX(0.8815);">314.89</span>
<span class="t" style="top:772.72px;font:700 22.17px/22.17px 'Liberation Mono', monospace;color:#201f1e;left:454.14px;transform:scaleX(0.8815);">345.96</span>
<span class="t" style="top:772.72px;font:700 22.17px/22.17px 'Liberation Mono', monospace;color:#201f1e;left:780.24px;transform:scaleX(0.8815);">111.73</span>
<span class="t" style="top:772.72px;font:700 22.17px/22.17px 'Liberation Mono', monospace;color:#201f1e;left:925.24px;transform:scaleX(0.8815);">116.58</span>
<span class="t" style="top:810.79px;font:400 21.51px/21.51px 'Liberation Sans', sans-serif;color:#252423;left:77.90px;transform:scaleX(0.8978);">EMEA</span>
<span class="t" style="top:812.02px;font:400 22.17px/22.17px 'Liberation Mono', monospace;color:#201f1e;left:310.52px;transform:scaleX(0.8815);">213.99</span>
<span class="t" style="top:812.02px;font:400 22.17px/22.17px 'Liberation Mono', monospace;color:#201f1e;left:455.02px;transform:scaleX(0.8815);">234.43</span>
<span class="t" style="top:812.02px;font:400 22.17px/22.17px 'Liberation Mono', monospace;color:#201f1e;left:792.84px;transform:scaleX(0.8815);">76.33</span>
<span class="t" style="top:812.02px;font:400 22.17px/22.17px 'Liberation Mono', monospace;color:#201f1e;left:936.96px;transform:scaleX(0.8815);">76.41</span>
<span class="t" style="top:850.39px;font:400 21.51px/21.51px 'Liberation Sans', sans-serif;color:#252423;left:78.80px;transform:scaleX(0.8932);">APAC</span>
<span class="t" style="top:851.62px;font:400 22.17px/22.17px 'Liberation Mono', monospace;color:#201f1e;left:310.52px;transform:scaleX(0.8815);">100.89</span>
<span class="t" style="top:851.62px;font:400 22.17px/22.17px 'Liberation Mono', monospace;color:#201f1e;left:455.02px;transform:scaleX(0.8815);">111.53</span>
<span class="t" style="top:851.62px;font:400 22.17px/22.17px 'Liberation Mono', monospace;color:#201f1e;left:792.84px;transform:scaleX(0.8815);">35.40</span>
<span class="t" style="top:851.62px;font:400 22.17px/22.17px 'Liberation Mono', monospace;color:#201f1e;left:937.84px;transform:scaleX(0.8815);">40.18</span>
<span class="t" style="top:44.47px;font:400 34.88px/34.88px 'Liberation Sans', sans-serif;color:#252423;left:1851.97px;transform:scaleX(1.0174);">Data Input</span>
<span class="t" style="top:127.62px;font:400 22.53px/22.53px 'Liberation Sans', sans-serif;color:#252423;-webkit-text-stroke:0.63px #252423;left:1798.78px;transform:scaleX(0.9597);">Insert as</span>
<span class="t" style="top:241.51px;font:400 22.67px/22.67px 'Liberation Sans', sans-serif;color:#252423;left:1859.10px;transform:scaleX(0.9044);">Visual</span>
<span class="t" style="top:274.72px;font:400 21.95px/21.95px 'Liberation Sans', sans-serif;color:#252423;left:1846.95px;transform:scaleX(0.9459);">Measure</span>
<span class="t" style="top:241.51px;font:400 22.67px/22.67px 'Liberation Sans', sans-serif;color:#252423;left:2045.00px;transform:scaleX(0.9044);">Visual</span>
<span class="t" style="top:274.72px;font:400 21.95px/21.95px 'Liberation Sans', sans-serif;color:#252423;left:2034.70px;transform:scaleX(0.9960);">Column</span>
<span class="t" style="top:351.81px;font:400 22.67px/22.67px 'Liberation Sans', sans-serif;color:#252423;-webkit-text-stroke:0.63px #252423;left:1798.55px;transform:scaleX(1.0257);">Input type</span>
<span class="t" style="top:408.15px;font:400 22.97px/22.97px 'Liberation Sans', sans-serif;color:#252423;left:1865.30px;transform:scaleX(0.9021);">Single Select</span>
<span class="t" style="top:481.72px;font:400 22.53px/22.53px 'Liberation Sans', sans-serif;color:#252423;-webkit-text-stroke:0.63px #252423;left:1799.00px;transform:scaleX(0.9995);">Options</span>
<span class="t" style="top:480.37px;font:400 24.13px/24.13px 'Liberation Sans', sans-serif;color:#1b78c8;left:2152.00px;transform:scaleX(0.9443);">Add option</span>
<span class="t" style="top:572.65px;font:400 22.97px/22.97px 'Liberation Sans', sans-serif;color:#323130;left:1858.08px;transform:scaleX(0.9190);">Channel</span>
<span class="t" style="top:652.65px;font:400 22.97px/22.97px 'Liberation Sans', sans-serif;color:#323130;left:1858.08px;transform:scaleX(0.9205);">Store</span>
<span class="t" style="top:728.38px;font:400 22.82px/22.82px 'Liberation Sans', sans-serif;color:#323130;left:1869.26px;transform:scaleX(0.9420);">Direct</span>
<span class="t" style="top:801.41px;font:400 22.67px/22.67px 'Liberation Sans', sans-serif;color:#323130;left:1859.30px;transform:scaleX(0.9194);">Web</span>
<span class="t" style="top:908.74px;font:400 23.69px/23.69px 'Liberation Sans', sans-serif;color:#323130;left:1843.00px;transform:scaleX(0.9277);">Allow entry on Total/Subtotal rows</span>
<span class="t" style="top:964.82px;font:400 22.53px/22.53px 'Liberation Sans', sans-serif;color:#252423;-webkit-text-stroke:0.63px #252423;left:1800.20px;transform:scaleX(1.0101);">Allow Input</span>
<span class="t" style="top:1021.91px;font:400 23.26px/23.26px 'Liberation Sans', sans-serif;color:#323130;left:1813.73px;transform:scaleX(0.9369);">In both PowerBI read and edit mode</span>
<span class="t" style="top:1095.55px;font:400 22.97px/22.97px 'Liberation Sans', sans-serif;color:#252423;-webkit-text-stroke:0.64px #252423;left:1798.62px;transform:scaleX(0.9813);">Description</span>
<span class="t" style="top:1145.24px;font:400 23.69px/23.69px 'Liberation Sans', sans-serif;color:#a19f9d;left:1809.82px;transform:scaleX(0.9849);">Briefly describe the formula</span>
<span class="t" style="top:1217.15px;font:400 24.27px/24.27px 'Liberation Sans', sans-serif;color:#201f1e;-webkit-text-stroke:0.68px #201f1e;left:2015.57px;transform:scaleX(0.9316);">Close</span>
<span class="t" style="top:1217.15px;font:400 24.27px/24.27px 'Liberation Sans', sans-serif;color:#ffffff;-webkit-text-stroke:0.68px #ffffff;left:2169.55px;transform:scaleX(0.9504);">Create</span>
<span class="t" style="top:127.07px;font:400 22px/22px 'Liberation Sans', sans-serif;color:#a4262c;left:1888.60px;">*</span>
<span class="t" style="top:351.07px;font:400 22px/22px 'Liberation Sans', sans-serif;color:#a4262c;left:1907.30px;">*</span>
<span class="t" style="top:481.07px;font:400 22px/22px 'Liberation Sans', sans-serif;color:#a4262c;left:1883.50px;">*</span>
<span class="t" style="top:1250.52px;font:400 23.84px/23.84px 'Liberation Sans', sans-serif;color:#323130;left:4.30px;transform:scaleX(0.8876);">Total rows: 9</span>
<span class="t" style="top:1250.52px;font:400 23.84px/23.84px 'Liberation Sans', sans-serif;color:#323130;left:745.61px;transform:scaleX(0.8857);">Rows per page:</span>
<span class="t" style="top:1254.65px;font:400 22.97px/22.97px 'Liberation Sans', sans-serif;color:#323130;left:921.50px;transform:scaleX(0.9769);">Auto</span>
<span class="t" style="top:1255.85px;font:400 22.97px/22.97px 'Liberation Sans', sans-serif;color:#323130;left:1287.87px;transform:scaleX(0.9298);">100%</span>
<span class="t" style="top:1251.15px;font:400 22.97px/22.97px 'Liberation Sans', sans-serif;color:#323130;left:1443.87px;transform:scaleX(0.9293);">9 records</span>
<span class="t" style="top:1251.15px;font:400 22.97px/22.97px 'Liberation Sans', sans-serif;color:#323130;left:1604.97px;transform:scaleX(0.9281);">Page 1 of 1</span>
</body></html>
